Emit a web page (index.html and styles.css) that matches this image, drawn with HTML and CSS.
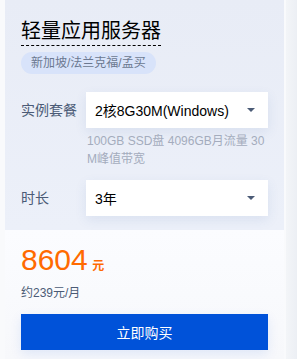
FILE: index.html
```html
<!DOCTYPE html>
<html lang="en">
<head>
    <meta charset="UTF-8">
    <title>轻量应用服务器</title>
    <link rel="stylesheet" href="styles.css">
</head>
<body>
    <div class="page">
        <div class="card">
            <div class="card-top">
                <h2 class="card-title">轻量应用服务器</h2>
                <span class="region-tag">新加坡/法兰克福/孟买</span>

                <div class="form-row">
                    <span class="form-label">实例套餐</span>
                    <div class="form-field">
                        <div class="select">
                            <span>2核8G30M(Windows)</span>
                            <span class="select-arrow"></span>
                        </div>
                        <p class="field-desc">100GB SSD盘 4096GB月流量 30M峰值带宽</p>
                    </div>
                </div>

                <div class="form-row">
                    <span class="form-label">时长</span>
                    <div class="form-field">
                        <div class="select">
                            <span>3年</span>
                            <span class="select-arrow"></span>
                        </div>
                    </div>
                </div>
            </div>

            <div class="card-bottom">
                <div class="price">
                    <span class="price-num">8604</span>
                    <span class="price-unit">元</span>
                </div>
                <p class="price-month">约239元/月</p>
                <button class="buy-btn">立即购买</button>
            </div>
        </div>
        <div class="card-next"></div>
    </div>
</body>
</html>
```

FILE: styles.css
```css
:root {
    --text-color: #000000;
    --label-color: #4b5b76;
    --desc-color: #a4acbd;
    --orange: #ff6a00;
    --blue: #0052d9;
}

body {
    margin: 0;
    padding: 0;
    background-color: #f9fafc;
    font-family: "Liberation Sans", "Noto Sans CJK SC", sans-serif;
    color: var(--text-color);
}

.page {
    display: flex;
    height: 359px;
    overflow: hidden;
    padding-left: 5px;
}

.card {
    width: 279px;
    flex-shrink: 0;
    display: flex;
    flex-direction: column;
    background-color: #fbfcfe;
}

.card-next {
    margin-left: 2px;
    flex-grow: 1;
    background: linear-gradient(90deg, #f3f5f8, #eceff4);
}

.card-top {
    height: 230px;
    box-sizing: border-box;
    padding: 18px 16px 0;
    background: linear-gradient(180deg, #e8ecf6 0%, #ecf0f9 100%);
}

.card-title {
    display: inline-block;
    margin: 0;
    font-size: 20px;
    font-weight: normal;
    line-height: 26px;
    padding-bottom: 1px;
    border-bottom: 1px dashed #000;
}

.region-tag {
    display: table;
    margin-top: 6px;
    padding: 0 10px;
    height: 22px;
    line-height: 22px;
    border-radius: 11px;
    background-color: #d8e3fa;
    color: #6b7890;
    font-size: 12px;
}

.form-row {
    display: flex;
    align-items: flex-start;
    margin-top: 18px;
}

.form-row + .form-row {
    margin-top: 12px;
}

.form-label {
    width: 65px;
    flex-shrink: 0;
    line-height: 36px;
    font-size: 14px;
    color: var(--label-color);
}

.form-field {
    width: 182px;
}

.select {
    height: 36px;
    display: flex;
    align-items: center;
    justify-content: space-between;
    padding: 0 13px 0 9px;
    background-color: #fff;
    font-size: 14px;
    box-shadow: 0 4px 12px rgba(55, 99, 170, 0.1);
}

.select-arrow {
    width: 0;
    height: 0;
    border-left: 4px solid transparent;
    border-right: 4px solid transparent;
    border-top: 4px solid #4b5b76;
}

.field-desc {
    margin: 4px 0 0 1px;
    font-size: 12px;
    line-height: 18px;
    color: var(--desc-color);
    word-break: break-all;
}

.card-bottom {
    flex-grow: 1;
    padding: 13px 16px 0;
    background: linear-gradient(180deg, #fbfcff 0%, #f7f8fb 100%);
}

.price {
    color: var(--orange);
    line-height: 34px;
}

.price-num {
    font-size: 30px;
}

.price-unit {
    font-size: 12px;
    font-weight: bold;
}

.price-month {
    margin: 0;
    font-size: 12px;
    line-height: 20px;
    color: var(--label-color);
}

.buy-btn {
    display: block;
    margin-top: 11px;
    width: 247px;
    height: 36px;
    border: 0;
    background-color: var(--blue);
    color: #fff;
    font-family: inherit;
    font-size: 14px;
    box-shadow: 0 4px 12px rgba(0, 82, 217, 0.1);
}
```
